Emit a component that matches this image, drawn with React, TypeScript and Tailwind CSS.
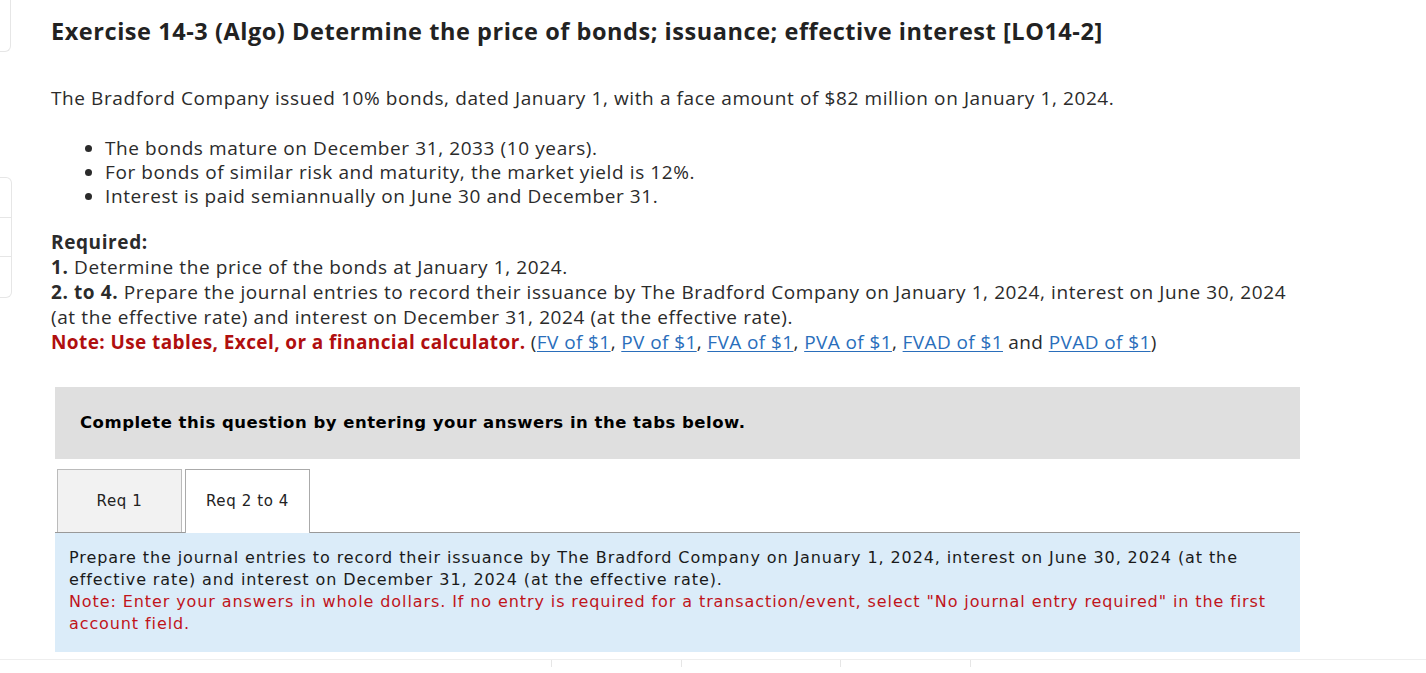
export default function App() {
  const links = ['FV of $1', 'PV of $1', 'FVA of $1', 'PVA of $1', 'FVAD of $1']

  return (
    <div className="relative min-h-[673px] bg-white text-[#2b2b2b] font-['Open_Sans',sans-serif]">
      {/* left rail stubs */}
      <div className="absolute left-0 top-0 w-[11px] h-[52px] border border-l-0 border-t-0 border-[#e6e6e6] rounded-br-md" />
      <div className="absolute left-0 top-[177px] w-[12px] flex flex-col border border-l-0 border-[#e6e6e6] rounded-r-md">
        <div className="h-[40px] border-b border-[#e6e6e6]" />
        <div className="h-[39px] border-b border-[#e6e6e6]" />
        <div className="h-[40px]" />
      </div>

      <div className="pl-[51px] pt-[17px] pr-[126px]">
        <h1 className="text-[23.5px] font-bold leading-[28px] tracking-[0.55px] text-[#222]">
          Exercise 14-3 (Algo) Determine the price of bonds; issuance; effective interest [LO14-2]
        </h1>

        <p className="mt-[41px] text-[19px] leading-[24px] tracking-[0.6px]">
          The Bradford Company issued 10% bonds, dated January 1, with a face amount of $82 million on January 1, 2024.
        </p>

        <ul className="mt-[26px] ml-[40px] list-disc pl-[14px] text-[19px] leading-[24px] tracking-[0.6px]">
          <li>The bonds mature on December 31, 2033 (10 years).</li>
          <li>For bonds of similar risk and maturity, the market yield is 12%.</li>
          <li>Interest is paid semiannually on June 30 and December 31.</li>
        </ul>

        <div className="mt-[22px] text-[19px] leading-[25px] tracking-[0.6px]">
          <p className="font-bold">Required:</p>
          <p>
            <b>1.</b> Determine the price of the bonds at January 1, 2024.
          </p>
          <p>
            <b>2. to 4.</b> Prepare the journal entries to record their issuance by The Bradford Company on January 1, 2024, interest on June 30, 2024 (at the effective rate) and interest on December 31, 2024 (at the effective rate).
          </p>
          <p className="tracking-[0.4px]">
            <b className="text-[#b00f0f]">Note: Use tables, Excel, or a financial calculator.</b>{' '}
            (
            {links.map((l, i) => (
              <span key={l}>
                <a className="text-[#2a6ebb] underline underline-offset-2 decoration-1">{l}</a>
                {i < links.length - 1 ? ', ' : ''}
              </span>
            ))}{' '}
            and <a className="text-[#2a6ebb] underline underline-offset-2 decoration-1">PVAD of $1</a>)
          </p>
        </div>
      </div>

      <div className="ml-[55px] w-[1245px] mt-[32px] font-['DejaVu_Sans',Verdana,sans-serif]">
        <div className="bg-[#dfdfdf] h-[72px] flex items-center px-[25px]">
          <span className="font-bold text-[16.5px] tracking-[0.5px] text-black">
            Complete this question by entering your answers in the tabs below.
          </span>
        </div>

        <div className="mt-[10px] flex items-end gap-[3px] pl-[2px] border-b border-[#999]">
          <div className="w-[125px] h-[63px] bg-[#f2f2f2] border border-b-0 border-[#bbb] flex items-center justify-center text-[15px] tracking-[0.6px] text-[#222]">
            Req 1
          </div>
          <div className="w-[125px] h-[64px] -mb-px bg-white border border-b-0 border-[#aaa] flex items-center justify-center text-[15px] tracking-[0.6px] text-[#222]">
            Req 2 to 4
          </div>
        </div>

        <div className="bg-[#dbecf9] h-[119px] pl-[14px] pr-[30px] pt-[14px] text-[16px] leading-[22px] tracking-[0.9px]">
          <p className="text-[#1a1a1a]">
            Prepare the journal entries to record their issuance by The Bradford Company on January 1, 2024, interest on June 30, 2024 (at the effective rate) and interest on December 31, 2024 (at the effective rate).
          </p>
          <p className="text-[#c0141b]">
            Note: Enter your answers in whole dollars. If no entry is required for a transaction/event, select "No journal entry required" in the first account field.
          </p>
        </div>
      </div>

      {/* next section border */}
      <div className="mt-[7px] border-t border-[#eeeeee] flex h-[8px]">
        <div className="w-[551px]" />
        <div className="w-[130px] border-l border-[#e6e6e6]" />
        <div className="w-[159px] border-l border-[#e6e6e6]" />
        <div className="w-[130px] border-l border-[#e6e6e6]" />
        <div className="border-l border-[#e6e6e6]" />
      </div>
    </div>
  )
}
